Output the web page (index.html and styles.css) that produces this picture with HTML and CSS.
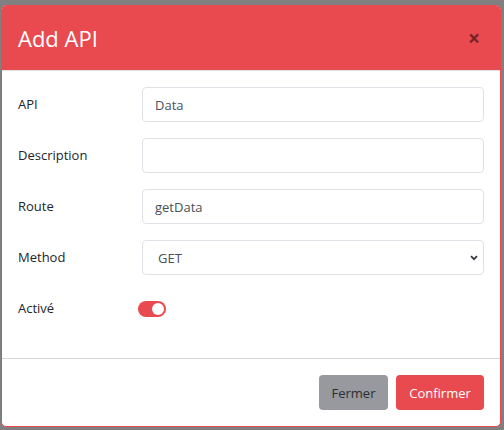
FILE: index.html
```html
<!DOCTYPE html>
<html lang="fr">
<head>
<meta charset="utf-8">
<title>Add API</title>
<link rel="stylesheet" href="styles.css">
</head>
<body>
<div class="modal">
  <div class="modal-header">
    <h5 class="modal-title">Add API</h5>
    <button class="close" type="button" aria-label="Close">&times;</button>
  </div>
  <div class="modal-body">
    <div class="form-row">
      <label class="form-label">API</label>
      <input class="form-control" type="text" value="Data">
    </div>
    <div class="form-row">
      <label class="form-label">Description</label>
      <input class="form-control" type="text" value="">
    </div>
    <div class="form-row">
      <label class="form-label">Route</label>
      <input class="form-control" type="text" value="getData">
    </div>
    <div class="form-row">
      <label class="form-label">Method</label>
      <div class="select">
        <span class="select-value">GET</span>
        <svg class="chevron" width="8" height="6" viewBox="0 0 8 6"><path d="M1 1.2 L4 4.2 L7 1.2" fill="none" stroke="#343a40" stroke-width="1.8"/></svg>
      </div>
    </div>
    <div class="form-row">
      <label class="form-label">Activé</label>
      <div class="switch-cell">
        <span class="switch"><span class="thumb"></span></span>
      </div>
    </div>
  </div>
  <div class="modal-footer">
    <button class="btn btn-secondary" type="button">Fermer</button>
    <button class="btn btn-danger" type="button">Confirmer</button>
  </div>
</div>
</body>
</html>
```

FILE: styles.css
```css
html, body {
  margin: 0;
  padding: 0;
}
body {
  background: #808080;
  font-family: "Open Sans", "Noto Sans", sans-serif;
  font-size: 13px;
  color: #212529;
  height: 430px;
  overflow: hidden;
}
.modal {
  margin: 5px 0 0 1px;
  width: 500px;
  box-sizing: border-box;
  background: #fff;
  border: 1px solid #e84a50;
  border-radius: 5px;
  overflow: hidden;
}
.modal-header {
  background: #e84a50;
  display: flex;
  align-items: center;
  justify-content: space-between;
  padding: 16px 16px;
  border-bottom: 1px solid #dee2e6;
  height: 32px;
}
.modal-title {
  margin: 0;
  font-weight: 400;
  font-size: 22px;
  line-height: 32px;
  color: #fff;
}
.close {
  background: none;
  border: 0;
  padding: 0;
  margin-right: 4px;
  font-family: "Open Sans", sans-serif;
  font-size: 21px;
  font-weight: 700;
  line-height: 1;
  color: #000;
  opacity: 0.5;
}
.modal-body {
  padding: 16px 16px 32px;
  display: flex;
  flex-direction: column;
  gap: 16px;
}
.form-row {
  display: grid;
  grid-template-columns: 124px 1fr;
  align-items: center;
  height: 35px;
}
.form-label {
  line-height: 21px;
}
.form-control,
.select {
  box-sizing: border-box;
  height: 35px;
  width: 100%;
  border: 1px solid #dee2e6;
  border-radius: 4px;
  background: #fff;
  font-family: inherit;
  font-size: 13px;
  color: #495057;
  padding: 0 12px;
  margin: 0;
  outline: none;
}
.select {
  display: flex;
  align-items: center;
  justify-content: space-between;
  padding: 0 5px 0 15px;
}
.chevron {
  display: block;
}
.switch-cell {
  display: flex;
  align-items: center;
}
.switch {
  margin-left: -4px;
  width: 28px;
  height: 16px;
  border-radius: 8px;
  background: #e84a50;
  display: flex;
  align-items: center;
  justify-content: flex-end;
  padding: 0 2px;
  box-sizing: border-box;
}
.thumb {
  width: 12px;
  height: 12px;
  border-radius: 50%;
  background: #fff;
}
.modal-footer {
  border-top: 1px solid #d3d6da;
  padding: 12px;
  display: flex;
  justify-content: flex-end;
}
.btn {
  margin: 4px;
  height: 35px;
  padding: 0 12px;
  border: 0;
  border-radius: 4px;
  font-family: inherit;
  font-size: 13px;
}
.btn-secondary {
  background: #97999e;
  color: #2b2d30;
  width: 69px;
}
.btn-danger {
  background: #e84a50;
  color: #fff;
  width: 88px;
}
```
